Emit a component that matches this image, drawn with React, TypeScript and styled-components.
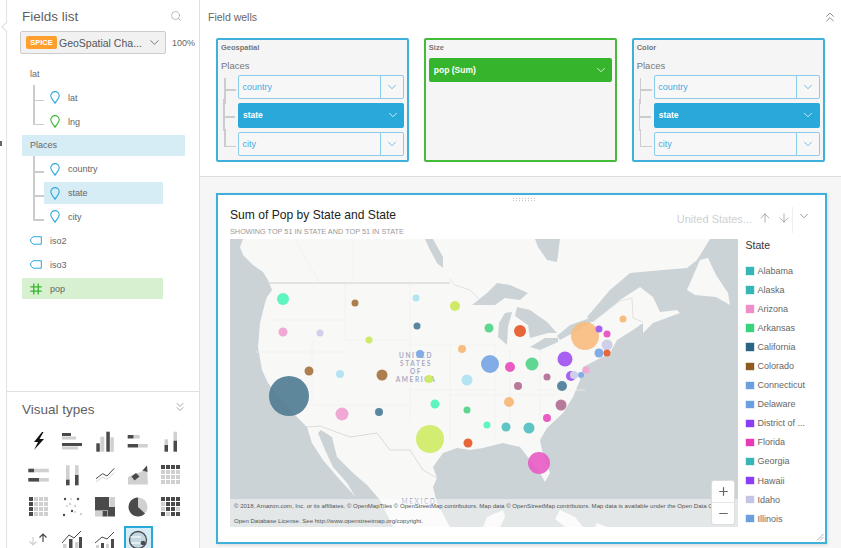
import React from "react";
import styled, { createGlobalStyle } from "styled-components";
import { ArrowDown, ArrowUp, ChevronDown, ChevronsDown, ChevronsUp, Minus, Plus, Search } from "lucide-react";

const GlobalStyle = createGlobalStyle`
    html, body {
        margin: 0;
        padding: 0;
        background: #fff;
    }
    * {
        box-sizing: border-box;
    }
`;

const BLUE = "#29a8da";
const GREEN = "#36b52c";
const DARK = "#4a4a4a";
const LIGHT = "#d0d0d0";

const Page = styled.div`
    display: flex;
    width: 841px;
    height: 548px;
    overflow: hidden;
    font-family: "Liberation Sans", Arial, sans-serif;
    color: #666;
`;

const Rail = styled.div`
    position: relative;
    flex: 0 0 7px;
    border-right: 1px solid #e2e2e2;
    &::before {
        content: "";
        position: absolute;
        top: 23px;
        left: 3px;
        width: 7px;
        height: 7px;
        background: #fff;
        border-left: 1px solid #ddd;
        border-bottom: 1px solid #ddd;
        transform: rotate(45deg);
    }
    &::after {
        content: "";
        position: absolute;
        top: 141px;
        left: 0;
        width: 2px;
        height: 5px;
        background: #666;
    }
`;

const Sidebar = styled.aside`
    flex: 0 0 193px;
    display: flex;
    flex-direction: column;
    border-right: 1px solid #e0e0e0;
    overflow: hidden;
`;

const FieldsPanel = styled.section`
    flex: 0 0 391px;
`;

const PanelHeader = styled.div`
    display: flex;
    align-items: center;
    justify-content: space-between;
    height: 31px;
    padding: 1px 17px 0 15px;
    color: #999;
`;

const PanelTitle = styled.h2`
    margin: 0;
    font-size: 13.5px;
    font-weight: 400;
    color: #5f5f5f;
`;

const DatasetRow = styled.div`
    display: flex;
    align-items: center;
    gap: 6px;
    padding-left: 13px;
`;

const DatasetSelect = styled.div`
    display: flex;
    align-items: center;
    width: 146px;
    height: 23px;
    padding: 0 3px 0 5px;
    background: #f1f1f1;
    border: 1px solid #ccc;
    border-radius: 2px;
    color: #555;
`;

const SpiceBadge = styled.span`
    flex: 0 0 31px;
    height: 13px;
    line-height: 13px;
    background: #ff9f2d;
    border-radius: 2px;
    color: #fff;
    font-size: 7.5px;
    font-weight: 700;
    text-align: center;
`;

const DatasetName = styled.span`
    flex: 1;
    margin-left: 2px;
    font-size: 10.5px;
    white-space: nowrap;
`;

const Percent = styled.span`
    font-size: 9px;
    color: #666;
`;

const FieldList = styled.div`
    display: flex;
    flex-direction: column;
    margin-top: 8px;
    padding-left: 15px;
`;

const FieldRow = styled.div<{ $bg?: string; $wide?: boolean; $child?: boolean; $last?: boolean }>`
    position: relative;
    display: flex;
    align-items: center;
    gap: 8px;
    height: 21.85px;
    margin: 1px ${p => (p.$wide ? "14px" : "36px")} 1px ${p => (p.$child ? "22px" : "0")};
    padding-left: ${p => (p.$child ? "6px" : "8px")};
    background: ${p => p.$bg || "transparent"};
    border-radius: 1px;
    font-size: 9px;
    color: #666;
    ${p => p.$child && `
        &::before {
            content: "";
            position: absolute;
            left: -11px;
            top: -2px;
            width: 1.5px;
            height: ${p.$last ? "16px" : "26px"};
            background: #ccc;
        }
        &::after {
            content: "";
            position: absolute;
            left: -11px;
            top: 13px;
            width: 11px;
            height: 1.5px;
            background: #ccc;
        }
    `}
`;

const VisualPanel = styled.section`
    flex: 1;
    border-top: 1px solid #e0e0e0;
    min-height: 0;
`;

const VisualHeader = styled(PanelHeader)`
    height: 34px;
    padding: 0 12px 0 15px;
    color: #888;
    svg {
        margin-top: -4px;
    }
`;

const VisualGrid = styled.div`
    display: grid;
    grid-template-columns: repeat(5, 33px);
    grid-auto-rows: 32.6px;
    padding-left: 15.5px;
`;

const VisualCell = styled.div<{ $selected?: boolean }>`
    display: flex;
    align-items: center;
    justify-content: center;
    width: 29px;
    height: 29px;
    margin: 1.8px 2px;
    background: ${p => (p.$selected ? "#d5ecf6" : "transparent")};
    border: ${p => (p.$selected ? `2px solid ${BLUE}` : "none")};
`;

const Main = styled.main`
    flex: 1;
    display: flex;
    flex-direction: column;
    min-width: 0;
`;

const FieldWells = styled.section`
    flex: 0 0 177px;
    border-bottom: 1px solid #ddd;
`;

const WellsHeader = styled.div`
    display: flex;
    align-items: center;
    justify-content: space-between;
    height: 38px;
    padding: 0 3px 4px 8px;
    color: #888;
`;

const WellsTitle = styled.h3`
    margin: 0;
    font-size: 10.5px;
    font-weight: 400;
    color: #666;
`;

const WellsGrid = styled.div`
    display: grid;
    grid-template-columns: repeat(3, 1fr);
    gap: 14.5px;
    padding: 0 16px;
`;

const Well = styled.div<{ $color: string }>`
    height: 124px;
    padding: 3px;
    background: #f5f5f5;
    border: 2px solid ${p => p.$color};
    border-radius: 2px;
`;

const WellLabel = styled.div`
    height: 10px;
    line-height: 10px;
    font-size: 7.5px;
    font-weight: 700;
    color: #777;
`;

const GroupLabel = styled.div`
    height: 12px;
    line-height: 12px;
    margin: 7px 0 3px;
    font-size: 9.5px;
    color: #777;
`;

const PillStack = styled.div`
    display: flex;
    flex-direction: column;
    gap: 4px;
    padding-left: 17px;
`;

const Pill = styled.div<{ $bg?: string; $tree?: boolean; $first?: boolean; $last?: boolean }>`
    position: relative;
    display: flex;
    align-items: center;
    height: 24.3px;
    padding-left: ${p => (p.$bg ? "5px" : "3.5px")};
    background: ${p => p.$bg || "#f7f7f7"};
    border: ${p => (p.$bg ? "none" : "1.5px solid #8accea")};
    border-radius: 2px;
    color: ${p => (p.$bg ? "#fff" : "#4aaade")};
    font-size: ${p => (p.$bg ? "8.5px" : "9px")};
    font-weight: ${p => (p.$bg ? 700 : 400)};
    ${p => p.$tree && `
        &::before {
            content: "";
            position: absolute;
            left: -15px;
            top: ${p.$first ? "2px" : "-4px"};
            width: 1.5px;
            height: ${p.$first ? "26px" : p.$last ? "18px" : "32px"};
            background: #ccc;
        }
        &::after {
            content: "";
            position: absolute;
            left: -15px;
            top: 13px;
            width: 12px;
            height: 1.5px;
            background: #ccc;
        }
    `}
`;

const PillText = styled.span`
    flex: 1;
`;

const PillChevron = styled.span<{ $divider?: boolean }>`
    display: flex;
    align-items: center;
    justify-content: center;
    flex: 0 0 23px;
    height: 100%;
    border-left: ${p => (p.$divider ? "1.5px solid #8accea" : "none")};
`;

const SizePill = styled(Pill)`
    margin-top: 5px;
    height: 23.5px;
`;

const Canvas = styled.section`
    flex: 1;
    min-height: 0;
    padding: 16px 14px 4.5px 16px;
    background: #f6f6f6;
`;

const Card = styled.div`
    position: relative;
    height: 100%;
    padding: 0 0 0 12px;
    background: #fff;
    border: 2px solid #3fb0dc;
    box-shadow: 1px 1px 3px rgba(0, 0, 0, 0.12);
`;

const DragHandle = styled.div`
    width: 23px;
    height: 5px;
    margin: 2px auto 0;
    transform: translateX(-4px);
    background: radial-gradient(#aaa 0.6px, transparent 0.9px) 0 0 / 3px 2.5px;
`;

const CardHeader = styled.div`
    display: flex;
    justify-content: space-between;
    height: 37px;
`;

const CardTitle = styled.h1`
    margin: 5px 0 0;
    font-size: 12.1px;
    line-height: 16px;
    font-weight: 400;
    color: #222;
`;

const CardSubtitle = styled.div`
    margin-top: 4px;
    font-size: 7.3px;
    line-height: 9px;
    color: #999;
`;

const CardControls = styled.div`
    display: flex;
    align-items: flex-start;
    padding: 5px 14px 0 0;
    color: #777;
`;

const ControlLabel = styled.span`
    margin: 5px 3px 0 0;
    font-size: 11px;
    line-height: 14px;
    color: #d0d0d0;
    white-space: nowrap;
`;

const ControlIcon = styled.span`
    display: flex;
    width: 19px;
    justify-content: center;
    margin-top: 4px;
`;

const ControlMenu = styled.span`
    display: flex;
    margin-left: -1px;
    padding: 2px 0 10px 4px;
    border-left: 1px solid #eee;
    color: #666;
`;

const CardBody = styled.div`
    display: flex;
`;

const MapPane = styled.div`
    position: relative;
    flex: 0 0 508px;
    height: 288px;
    overflow: hidden;
`;

const MapDrawing = styled.svg`
    display: block;
    width: 508px;
    height: 288px;
`;

const Attribution = styled.div`
    position: absolute;
    left: 0;
    right: 0;
    bottom: 0;
    height: 28.5px;
    padding-left: 4px;
    background: rgba(255, 255, 255, 0.45);
    font-size: 6.05px;
    line-height: 15px;
    color: #555;
    white-space: nowrap;
`;

const ZoomControl = styled.div`
    position: absolute;
    right: 3px;
    bottom: 2.5px;
    display: flex;
    flex-direction: column;
    width: 24px;
    height: 45px;
    background: #fff;
    border: 1px solid #ddd;
    border-radius: 3px;
    color: #666;
`;

const ZoomButton = styled.div`
    flex: 1;
    display: flex;
    align-items: center;
    justify-content: center;
    & + & {
        border-top: 1px solid #e6e6e6;
    }
`;

const Legend = styled.div`
    flex: 1;
    padding-left: 7.5px;
`;

const LegendTitle = styled.div`
    height: 12px;
    line-height: 12px;
    margin-bottom: 10.5px;
    font-size: 10.5px;
    color: #333;
`;

const LegendItem = styled.div`
    display: flex;
    align-items: center;
    gap: 4px;
    height: 19.05px;
    font-size: 9px;
    color: #666;
    white-space: nowrap;
`;

const Swatch = styled.span<{ $color: string }>`
    flex: 0 0 7.5px;
    height: 7.5px;
    background: ${p => p.$color};
    box-shadow: 0 0 0 0.5px ${p => p.$color}66;
    margin-left: 0.5px;
`;

const ResizeGrip = styled.svg`
    position: absolute;
    right: 1px;
    bottom: 1px;
`;

const Pin = ({ color }: { color: string }) => (
    <svg width="10" height="13" viewBox="0 0 10 13" fill="none">
        <path d="M5 12.2C3.6 9.6 .8 7.6 .8 4.8a4.2 4.2 0 0 1 8.4 0C9.2 7.6 6.4 9.6 5 12.2Z" stroke={color} strokeWidth="1.1" />
    </svg>
);

const Tag = () => (
    <svg width="12" height="9" viewBox="0 0 12 9" fill="none">
        <path d="M3.2.7H11.3V8.2H3.2L.7 5.8V3Z" stroke={BLUE} strokeWidth="1" />
    </svg>
);

const HashMark = () => (
    <svg width="12" height="12" viewBox="0 0 12 12" fill="none" stroke={GREEN} strokeWidth="1.3">
        <path d="M3.8 .5V11.5M8.2 .5V11.5M.3 3.8H11.7M.3 8.2H11.7" />
    </svg>
);

type Bar = [number, number, number, number, boolean?];

const bars = (list: Bar[]) =>
    list.map(([x, y, w, h, dark], i) => <rect key={i} x={x} y={y} width={w} height={h} fill={dark ? DARK : LIGHT} />);

// 4x4 tile grid, `darkCells` holds the indexes drawn in the dark tone
const tiles = (darkCells: number[]) => {
    const cells: Bar[] = [];
    for (let i = 0; i < 16; i++) {
        cells.push([1 + (i % 4) * 5, 1 + Math.floor(i / 4) * 5, 4, 4, darkCells.includes(i)]);
    }
    return bars(cells);
};

const visualIcons: React.ReactNode[] = [
    <path d="M14 1 L6 11 H10 L6 19 L16 8 H11.5 L15.5 1Z" fill="#111" />,
    bars([[1, 2, 9, 3, true], [1, 5.5, 14, 3], [1, 12, 20, 3, true], [1, 15.5, 16, 3]]),
    bars([[2.3, 12.3, 3.5, 8.4, true], [6.3, 5.7, 4, 15], [12.3, .7, 3.5, 20, true], [16.3, 6.3, 3.5, 14.5]]),
    bars([[.7, 4, 6, 3.5, true], [6.7, 4, 6, 3.5], [.7, 13, 10.5, 3.5, true], [11.2, 13, 9.5, 3.5]]),
    bars([[4.5, 8.3, 3.5, 5.7], [4.5, 14, 3.5, 6.7, true], [13.5, .7, 3.5, 9], [13.5, 9.7, 3.5, 11, true]]),
    bars([[.3, 4.7, 6, 3.6, true], [6.3, 4.7, 14.5, 3.6], [.3, 14, 11, 3.6, true], [11.3, 14, 9.5, 3.6]]),
    bars([[5, 1.3, 3.6, 14.3], [5, 15.6, 3.6, 5.7, true], [14, 1.3, 3.6, 9.7], [14, 11, 3.6, 10.3, true]]),
    <g fill="none" strokeWidth="1">
        <polyline points="2,18 8.7,13 13,15.3 20.3,8.7" stroke={LIGHT} />
        <polyline points="2,14.7 8.7,9.7 13,12 20.3,4.3" stroke={DARK} />
    </g>,
    <g>
        <path d="M1 20.5V13L7 10 14 8 20 1.5 21 20.5Z" fill={LIGHT} />
        <path d="M4.5 12.5 9 9 12.5 12.5 7.5 16.5Z M15.5 6.5 20 1.5 20.5 8Z" fill={DARK} />
    </g>,
    tiles([0, 1, 2, 3]),
    tiles([0, 4, 8, 12]),
    <g>
        {[[3, 19], [9, 8], [17, 3], [14, 10], [11, 15], [20, 18], [4, 3]].map(([x, y], i) => (
            <circle key={i} cx={x} cy={y} r="1.2" fill={i % 2 ? LIGHT : DARK} />
        ))}
        {[[6, 10], [14, 16], [10, 3]].map(([x, y], i) => (
            <circle key={i} cx={x} cy={y} r="1" fill={LIGHT} />
        ))}
    </g>,
    bars([[1, 1, 14, 13.5, true], [15.5, 1, 5.5, 13.5], [1, 15, 7, 5.5], [8.5, 15, 5, 5.5, true], [14, 11, 7, 9.5, true]]),
    <g>
        <circle cx="11" cy="11" r="9.5" fill={LIGHT} />
        <path d="M11 11V1.5A9.5 9.5 0 1 0 18 17.5Z" fill={DARK} />
    </g>,
    tiles([0, 1, 2, 3, 5, 6, 7, 9, 10, 12, 14, 15]),
    <g>
        <path d="M5 8V16M1.5 12.5 5 16 8.5 12.5" fill="none" stroke={LIGHT} strokeWidth="1.2" />
        <path d="M15 13V5M11.5 8.5 15 5 18.5 8.5" fill="none" stroke={DARK} strokeWidth="1.2" />
        {bars([[1, 19, 18, 3, false]])}
    </g>,
    <g>
        <polyline points="1,14 8,6 13,9 20,2" fill="none" stroke={DARK} strokeWidth="1" />
        {bars([[2, 15, 3.5, 7], [8, 10, 3.5, 12, true], [14, 13, 3.5, 9], [18, 8, 3, 14, true]])}
    </g>,
    <g>
        <polyline points="1,14 8,8 13,10 20,3" fill="none" stroke={DARK} strokeWidth="1" />
        {bars([[2, 16, 3, 6], [7, 14, 3, 8, true], [12, 15, 3, 7], [17, 10, 3, 12, true]])}
    </g>,
    <g>
        <circle cx="11" cy="11" r="8.5" fill="#c4d8e2" stroke={DARK} strokeWidth="1.3" />
        <path d="M3.5 8H14M4 14H13" stroke="#eef5f8" strokeWidth="1.5" />
        <circle cx="16" cy="14" r="2.3" fill={DARK} />
    </g>,
];

const legend: [string, string][] = [
    ["Alabama", "#38b5b5"],
    ["Alaska", "#38b5b5"],
    ["Arizona", "#ee8fc8"],
    ["Arkansas", "#38d47c"],
    ["California", "#2a6484"],
    ["Colorado", "#8f5a20"],
    ["Connecticut", "#6a9fe0"],
    ["Delaware", "#6a9fe0"],
    ["District of ...", "#8a3df5"],
    ["Florida", "#ea38b8"],
    ["Georgia", "#38b5b5"],
    ["Hawaii", "#8a3df5"],
    ["Idaho", "#c5c5e5"],
    ["Illinois", "#6a9fe0"],
];

const TEAL = "#5fc4c4";
const MINT = "#5ff5c0";
const SEA = "#5fd692";
const SLATE = "#5a87a0";
const BROWN = "#ae7f4e";
const SKY = "#b4e4f2";
const LIME = "#cfea66";
const PINK = "#f0a8d4";
const LILAC = "#cfcfea";
const ROSE = "#b87a9c";
const PEACH = "#f7bd80";
const BLUEB = "#82ace6";
const ORANGE = "#e8673a";
const MAGENTA = "#e85cc4";
const PURPLE = "#a860f0";

const bubbles: [number, number, number, string][] = [
    [283, 299, 6, MINT],
    [355, 303, 3.5, BROWN],
    [416, 298, 3.5, SKY],
    [455, 306, 5, LIME],
    [283, 332, 4.5, PINK],
    [320, 333, 3.5, LILAC],
    [369, 340, 3.5, LIME],
    [417, 326, 3.5, SLATE],
    [489, 328, 4.5, SEA],
    [520, 331, 6, ORANGE],
    [462, 349, 4, PEACH],
    [420, 354, 4, BLUEB],
    [490, 364, 9, BLUEB],
    [510, 367, 5, MAGENTA],
    [532, 364, 6.5, SEA],
    [309, 371, 4.5, BROWN],
    [340, 374, 4, SKY],
    [382, 375, 5.5, BROWN],
    [429, 379, 4, LIME],
    [467, 380, 5.5, SKY],
    [518, 386, 4, ROSE],
    [509, 402, 5, PEACH],
    [289, 396, 20, "#517d94"],
    [342, 414, 6.5, PINK],
    [379, 412, 4, SLATE],
    [435, 404, 4.5, MINT],
    [467, 410, 3.5, SEA],
    [487, 425, 3.5, MINT],
    [506, 427, 4.5, TEAL],
    [430, 439, 14, LIME],
    [468, 443, 4.5, ORANGE],
    [529, 428, 5.5, TEAL],
    [539, 463, 11, MAGENTA],
    [547, 418, 4, MAGENTA],
    [561, 405, 5.5, ROSE],
    [562, 386, 5, SLATE],
    [547, 377, 3.5, ROSE],
    [571, 376, 5, PURPLE],
    [574, 375, 4, LILAC],
    [581, 375, 3, BLUEB],
    [586, 370, 3.5, PINK],
    [585, 336, 14, PEACH],
    [599, 329, 3.5, PURPLE],
    [607, 334, 3.5, MAGENTA],
    [607, 345, 5.5, LILAC],
    [599, 353, 4.5, BLUEB],
    [607, 353, 3.5, ORANGE],
    [623, 319, 3.5, PEACH],
    [565, 359, 7.5, PURPLE],
];

const WATER = "#ccd3d6";

const MainlandPath =
    "M243 239L240 247 243 255 253 265 263 272 268 280 272 290 267 297 265 303 260 323 258 347 262 370 268 383 293 413 307 427 312 443 323 460 340 480 353 494 356 498 347 483 333 467 325 450 318 433 321 430 332 437 337 457 353 473 367 485 380 500 393 527 450 527 437 503 433 487 437 478 433 467 443 453 457 448 470 450 483 448 503 443 520 447 530 460 540 473 545 482 550 473 542 450 540 440 547 428 563 413 573 397 580 380 583 367 610 353 617 340 633 330 643 323 643 333 653 323 680 313 677 310 660 312 653 297 640 287 620 300 593 322 587 317 610 290 630 273 663 270 687 268 697 260 710 239Z";

const USMap = () => (
    <MapDrawing viewBox="230 239 508 288">
        <rect x="230" y="239" width="508" height="288" fill={WATER} />
        <path d={MainlandPath} fill="#f8f8f7" />
        <path d="M687 290 700 260 708 258 716 275 728 293 730 305 716 297 695 295Z" fill="#f8f8f7" />
        <path d="M483 527 487 517 503 510 505 517 500 527ZM560 510 575 517 583 527 565 527 555 519ZM597 523 607 527 595 527Z" fill="#f8f8f7" />
        <g fill={WATER}>
            <path d="M425 239H433L443 257 443 268 437 263 430 250Z" />
            <path d="M535 239H560L557 262 547 260 538 247Z" />
            <path d="M472 305 487 293 497 283 510 285 528 293 520 300 505 298 495 305 480 305Z" />
            <path d="M498 337 499 323 505 313 512 312 508 327 507 345Z" />
            <path d="M517 307 530 310 547 322 557 333 548 333 530 338 528 325 515 316Z" />
            <path d="M530 347 545 338 558 338 558 342 540 350Z" />
            <path d="M557 336 570 325 590 318 593 321 575 332 560 340Z" />
        </g>
        <g fill="none" stroke="#f0f0ee" strokeWidth="0.8">
            <path d="M272 320H345M345 283V340M345 340H410M410 283V420M255 352H345M312 340V405M382 405H410M312 405H382M410 345H495M410 390H495M495 345V440M450 345V440M450 395H560M510 350V430M540 350V420M533 390H585M295 240L320 283M353 240V283" />
        </g>
        <path d="M268 283H450" fill="none" stroke="#dcdcda" strokeWidth="1.5" />
        <path d="M450 279 455 285 470 290 480 300M595 320 620 301 632 298 633 318 643 322" fill="none" stroke="#d8d8d6" strokeWidth="0.7" />
        <path d="M307 427 320 426 350 437 377 433 390 450 400 450 410 450 423 470 437 478" fill="none" stroke="#d4d4d2" strokeWidth="0.8" />
        <g fontFamily="'Lato', 'Liberation Sans', sans-serif" fontSize="6.5" fontWeight="700" fill="#a9a9c2" textAnchor="middle" letterSpacing="1.6">
            <text x="416" y="358">UNITED</text>
            <text x="416" y="366">STATES</text>
            <text x="416" y="374">OF</text>
            <text x="416" y="382">AMERICA</text>
            <text x="419" y="504">MEXICO</text>
        </g>
        {bubbles.map(([cx, cy, r, fill], i) => (
            <circle key={i} cx={cx} cy={cy} r={r} fill={fill} fillOpacity={r > 10 ? 0.92 : 1} />
        ))}
    </MapDrawing>
);

const Chevron = ({ color }: { color: string }) => <ChevronDown size={14} strokeWidth={1.3} color={color} />;

const PlacesStack = () => (
    <PillStack>
        <Pill $tree $first>
            <PillText>country</PillText>
            <PillChevron $divider><Chevron color="#4aaade" /></PillChevron>
        </Pill>
        <Pill $tree $bg={BLUE}>
            <PillText>state</PillText>
            <PillChevron><Chevron color="#fff" /></PillChevron>
        </Pill>
        <Pill $tree $last>
            <PillText>city</PillText>
            <PillChevron $divider><Chevron color="#4aaade" /></PillChevron>
        </Pill>
    </PillStack>
);

export default function App() {
    return (
        <Page>
            <GlobalStyle />
            <Rail />
            <Sidebar>
                <FieldsPanel>
                    <PanelHeader>
                        <PanelTitle>Fields list</PanelTitle>
                        <Search size={12} strokeWidth={1.3} />
                    </PanelHeader>
                    <DatasetRow>
                        <DatasetSelect>
                            <SpiceBadge>SPICE</SpiceBadge>
                            <DatasetName>GeoSpatial Cha...</DatasetName>
                            <ChevronDown size={15} strokeWidth={1.2} color="#555" />
                        </DatasetSelect>
                        <Percent>100%</Percent>
                    </DatasetRow>
                    <FieldList>
                        <FieldRow>lat</FieldRow>
                        <FieldRow $child><Pin color={BLUE} />lat</FieldRow>
                        <FieldRow $child $last><Pin color={GREEN} />lng</FieldRow>
                        <FieldRow $bg="#d7edf6" $wide>Places</FieldRow>
                        <FieldRow $child><Pin color={BLUE} />country</FieldRow>
                        <FieldRow $child $bg="#d7edf6"><Pin color={BLUE} />state</FieldRow>
                        <FieldRow $child $last><Pin color={BLUE} />city</FieldRow>
                        <FieldRow><Tag />iso2</FieldRow>
                        <FieldRow><Tag />iso3</FieldRow>
                        <FieldRow $bg="#d6f0d0"><HashMark />pop</FieldRow>
                    </FieldList>
                </FieldsPanel>
                <VisualPanel>
                    <VisualHeader>
                        <PanelTitle>Visual types</PanelTitle>
                        <ChevronsDown size={14} strokeWidth={1.3} />
                    </VisualHeader>
                    <VisualGrid>
                        {visualIcons.map((icon, i) => (
                            <VisualCell key={i} $selected={i === 18}>
                                <svg width="22" height="22" viewBox="0 0 22 22">{icon}</svg>
                            </VisualCell>
                        ))}
                    </VisualGrid>
                </VisualPanel>
            </Sidebar>
            <Main>
                <FieldWells>
                    <WellsHeader>
                        <WellsTitle>Field wells</WellsTitle>
                        <ChevronsUp size={16} strokeWidth={1.4} />
                    </WellsHeader>
                    <WellsGrid>
                        <Well $color="#3fb0dc">
                            <WellLabel>Geospatial</WellLabel>
                            <GroupLabel>Places</GroupLabel>
                            <PlacesStack />
                        </Well>
                        <Well $color="#45bb3a">
                            <WellLabel>Size</WellLabel>
                            <SizePill $bg={GREEN}>
                                <PillText>pop (Sum)</PillText>
                                <PillChevron><Chevron color="#fff" /></PillChevron>
                            </SizePill>
                        </Well>
                        <Well $color="#3fb0dc">
                            <WellLabel>Color</WellLabel>
                            <GroupLabel>Places</GroupLabel>
                            <PlacesStack />
                        </Well>
                    </WellsGrid>
                </FieldWells>
                <Canvas>
                    <Card>
                        <DragHandle />
                        <CardHeader>
                            <div>
                                <CardTitle>Sum of Pop by State and State</CardTitle>
                                <CardSubtitle>SHOWING TOP 51 IN STATE AND TOP 51 IN STATE</CardSubtitle>
                            </div>
                            <CardControls>
                                <ControlLabel>United States...</ControlLabel>
                                <ControlIcon><ArrowUp size={14} strokeWidth={1} /></ControlIcon>
                                <ControlIcon><ArrowDown size={14} strokeWidth={1} /></ControlIcon>
                                <ControlMenu><ChevronDown size={14} strokeWidth={1.1} /></ControlMenu>
                            </CardControls>
                        </CardHeader>
                        <CardBody>
                            <MapPane>
                                <USMap />
                                <Attribution>
                                    © 2018, Amazon.com, Inc. or its affiliates. © OpenMapTiles © OpenStreetMap contributors. Map data © OpenStreetMap contributors. Map data is available under the Open Data Co
                                    <br />
                                    Open Database License. See http://www.openstreetmap.org/copyright.
                                </Attribution>
                                <ZoomControl>
                                    <ZoomButton><Plus size={13} strokeWidth={2.2} /></ZoomButton>
                                    <ZoomButton><Minus size={13} strokeWidth={2.2} /></ZoomButton>
                                </ZoomControl>
                            </MapPane>
                            <Legend>
                                <LegendTitle>State</LegendTitle>
                                {legend.map(([name, color]) => (
                                    <LegendItem key={name}>
                                        <Swatch $color={color} />
                                        {name}
                                    </LegendItem>
                                ))}
                            </Legend>
                        </CardBody>
                        <ResizeGrip width="8" height="8" viewBox="0 0 8 8" stroke="#999" strokeWidth="0.8">
                            <path d="M1 7.5 7.5 1M4 7.5 7.5 4" />
                        </ResizeGrip>
                    </Card>
                </Canvas>
            </Main>
        </Page>
    );
}
